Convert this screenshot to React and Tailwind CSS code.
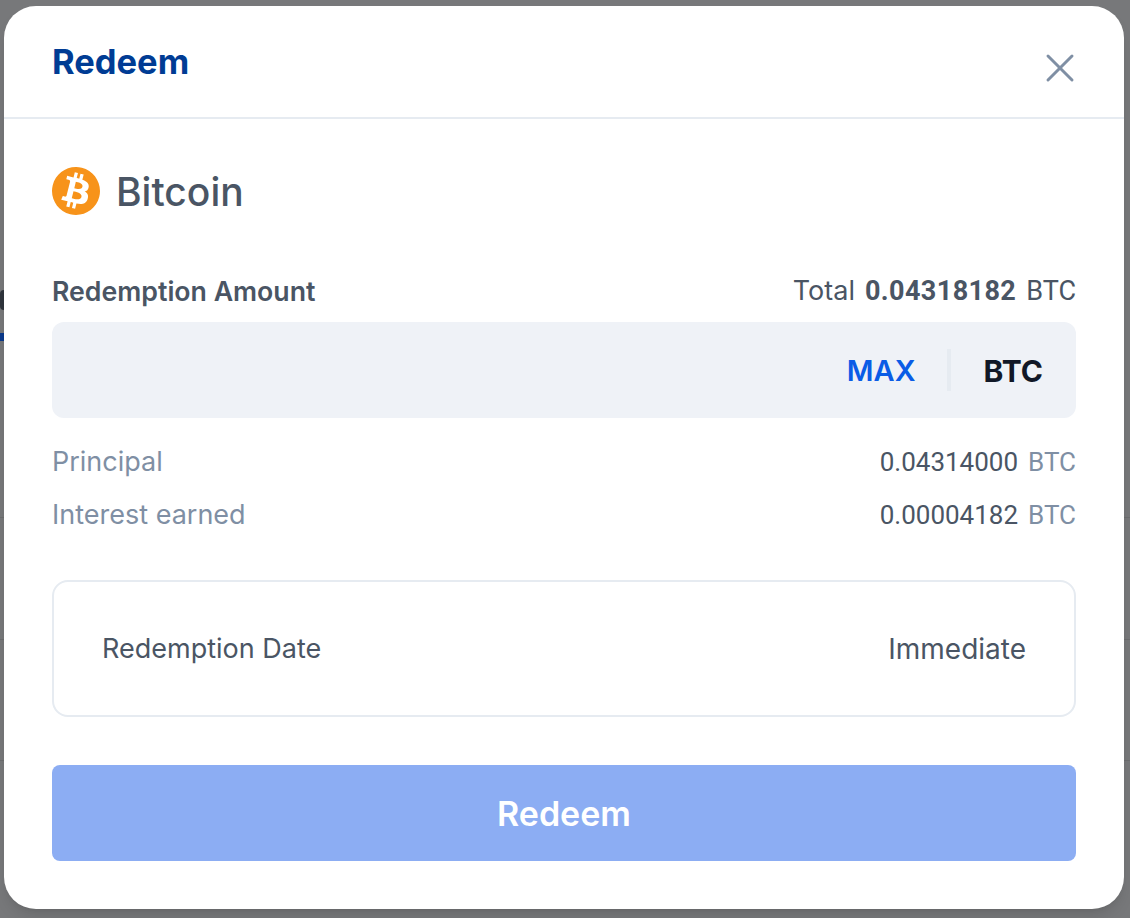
import { X } from "lucide-react";

const BitcoinLogo = () => (
  <svg viewBox="0 0 64 64" className="h-12 w-12 shrink-0">
    <path
      fill="#f7931a"
      d="M63.04 39.741c-4.274 17.143-21.638 27.575-38.783 23.301C7.12 58.768-3.313 41.404.962 24.262 5.234 7.117 22.597-3.317 39.737.957c17.144 4.274 27.576 21.64 23.302 38.784z"
    />
    <path
      fill="#fff"
      transform="translate(32 32) scale(1.2) translate(-32 -32)"
      d="M46.11 27.441c.636-4.258-2.606-6.547-7.039-8.074l1.438-5.768-3.512-.875-1.4 5.616c-.922-.23-1.87-.447-2.812-.662l1.41-5.653-3.509-.875-1.439 5.766c-.764-.174-1.514-.346-2.242-.527l.004-.018-4.842-1.209-.934 3.75s2.605.597 2.55.634c1.422.355 1.68 1.296 1.636 2.042l-1.638 6.571c.098.025.225.061.365.117l-.37-.092-2.297 9.205c-.174.432-.615 1.08-1.609.834.035.051-2.552-.637-2.552-.637l-1.743 4.02 4.57 1.139c.85.213 1.683.436 2.502.646l-1.453 5.835 3.507.875 1.44-5.772c.957.26 1.887.5 2.797.726L27.504 50.8l3.511.875 1.453-5.823c5.987 1.133 10.49.676 12.383-4.738 1.527-4.36-.075-6.875-3.225-8.516 2.294-.531 4.022-2.04 4.483-5.157zM38.087 38.69c-1.086 4.36-8.426 2.004-10.807 1.412l1.928-7.729c2.38.594 10.011 1.77 8.88 6.317zm1.085-11.312c-.99 3.966-7.1 1.951-9.083 1.457l1.748-7.01c1.983.494 8.367 1.416 7.335 5.553z"
    />
  </svg>
);

const Row = ({ label, value }) => (
  <div className="flex h-[53px] items-center justify-between text-[27px] leading-none">
    <span className="text-[#7f8fa4]">{label}</span>
    <span className="flex gap-[10px] font-['Roboto',sans-serif] text-[26px] text-[#4a5564]">
      <span>{value}</span>
      <span className="text-[#7f8fa4]">BTC</span>
    </span>
  </div>
);

const App = () => {
  return (
    <div className="relative h-[918px] w-[1130px] overflow-hidden bg-[#77787a] font-['Inter','Liberation_Sans',sans-serif]">
      {/* page behind the overlay */}
      <div className="absolute left-0 top-[290px] h-[20px] w-1 rounded-l-full bg-[#30353d]" />
      <div className="absolute left-0 top-[333px] h-2 w-1 bg-[#0b3a8c]" />
      <div className="absolute inset-x-0 top-[517px] h-px bg-[#6c6d6f]" />
      <div className="absolute inset-x-0 top-[639px] h-px bg-[#6c6d6f]" />
      <div className="absolute inset-x-0 top-[760px] h-px bg-[#6c6d6f]" />

      <div className="absolute left-1 top-[6px] h-[903px] w-[1120px] rounded-[32px] bg-white shadow-lg">
        <header className="flex h-[113px] items-center justify-between border-b-2 border-[#e6ebf1] px-12">
          <h1 className="mt-px text-[34.5px] font-bold text-[#003c94]">Redeem</h1>
          <button className="-mr-2 mt-[13px] text-[#7f8fa4]">
            <X size={48} strokeWidth={1.5} />
          </button>
        </header>

        <div className="px-12 pt-[48px]">
          <div className="flex items-center gap-4">
            <BitcoinLogo />
            <span className="text-[39px] font-medium leading-none text-[#4a5564]">Bitcoin</span>
          </div>

          <div className="mt-[58px] flex items-center justify-between text-[27px] leading-9 text-[#4a5564]">
            <span className="-mt-px text-[26.7px] font-semibold">Redemption Amount</span>
            <span className="flex items-center gap-[10px]">
              <span>Total</span>
              <span className="font-['Roboto',sans-serif] font-bold tracking-[0.4px]">0.04318182</span>
              <span className="font-['Roboto',sans-serif]">BTC</span>
            </span>
          </div>

          <div className="mt-[13px] flex h-24 items-center justify-end rounded-xl bg-[#eff2f7] pr-[33px]">
            <span className="mt-[2px] text-[29px] font-semibold text-[#0a5ce6]">MAX</span>
            <div className="ml-[31px] mr-[33px] h-[42px] w-1 bg-[#e6ebf1]" />
            <span className="mt-[2px] text-[30px] font-bold text-[#111827]">BTC</span>
          </div>

          <div className="mt-[17px]">
            <Row label="Principal" value="0.04314000" />
            <Row label="Interest earned" value="0.00004182" />
          </div>

          <div className="mt-[39px] flex h-[137px] items-center justify-between rounded-2xl border-2 border-[#e6ebf1] px-12 text-[27px] text-[#4a5564]">
            <span className="mt-[2px]">Redemption Date</span>
            <span className="text-[28px]">Immediate</span>
          </div>

          <button className="mt-[48px] h-24 w-full rounded-lg bg-[#8cadf3] text-[34px] font-semibold text-white">
            Redeem
          </button>
        </div>
      </div>
    </div>
  );
};

export default App;
